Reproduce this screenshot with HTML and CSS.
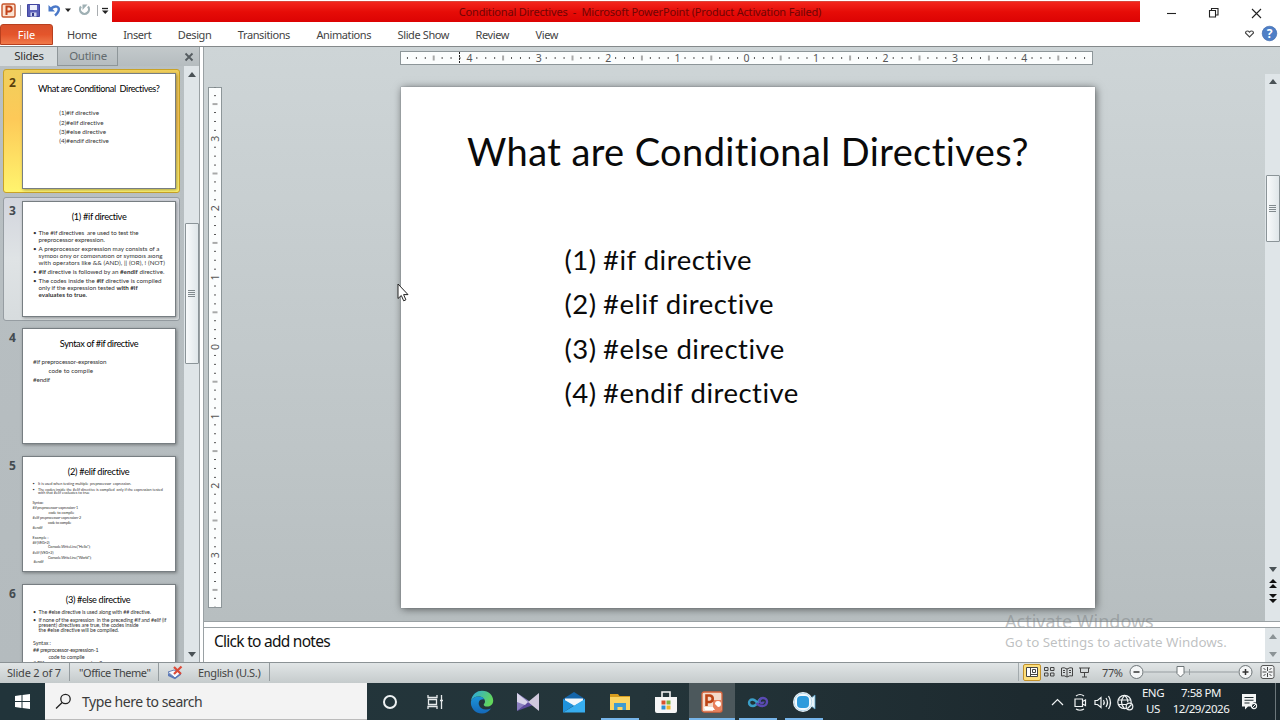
FILE: index.html
```html
<!DOCTYPE html>
<html lang="en">

<head>
    <meta charset="UTF-8">
    <meta name="viewport" content="width=device-width, initial-scale=1.0">
    <link rel="stylesheet" href="styles.css">
    <title>Conditional Directives</title>
</head>

<body>
    <div class="screen">
        <!-- title bar -->
        <header class="titlebar">
            <div class="quick">
                <svg width="112" height="24" viewBox="0 0 112 24">
                    <rect x="2" y="4" width="13" height="13" rx="1.5" fill="#fbe3d3" stroke="#c8552a" stroke-width="1.4" />
                    <path d="M6.5 15V6.5h2.7a2.4 2.4 0 0 1 0 5H6.5" fill="none" stroke="#c2431a" stroke-width="2" />
                    <path d="M20.5 5v11M97.5 5v11" stroke="#a9adb0" />
                    <path d="M27.5 4.5h12v12h-12z" fill="#5a5fb8" stroke="#4146a0" />
                    <path d="M30 5h7v5h-7z" fill="#eef1fb" />
                    <path d="M30.5 12.5h6v4h-6z" fill="#d3d8ee" />
                    <path d="M32 13h2v3h-2z" fill="#34388c" />
                    <path d="M51 8.5c5-4 9-1.5 7.5 2.5-.7 1.9-2 3.2-3.5 4.5" fill="none" stroke="#4a78c8" stroke-width="2.4" />
                    <path d="M48.5 5v6.5h6.5z" fill="#4a78c8" />
                    <path d="M65 8.5h6l-3 3.5z" fill="#222" />
                    <path d="M81 6.5a4.5 4.5 0 1 0 7 0" fill="none" stroke="#9fb0b4" stroke-width="2.2" />
                    <path d="M82.500 4.500v5.500l5-5.500z" fill="#9fb0b4" />
                    <path d="M102 8.5h6" stroke="#222" stroke-width="1.3" />
                    <path d="M102 10.5h6.5l-3.25 3.5z" fill="#222" />
                </svg>
            </div>
            <div class="title"><span>Conditional Directives &nbsp;-&nbsp; Microsoft PowerPoint (Product Activation Failed)</span></div>
            <svg class="window-buttons" width="140" height="24" viewBox="0 0 140 24" fill="none" stroke="#222" stroke-width="1.1">
                <path d="M27 13.5h9" />
                <path d="M69.5 10.5h6v6.5h-6zM71.5 10.5v-2h6.5v6.5h-2.5" />
                <path d="M112 9l9 9M121 9l-9 9" />
            </svg>
        </header>

        <!-- ribbon tabs -->
        <nav class="ribbon">
            <div class="file">File</div>
            <div class="tabs">
                <span>Home</span>
                <span>Insert</span>
                <span>Design</span>
                <span>Transitions</span>
                <span>Animations</span>
                <span>Slide Show</span>
                <span>Review</span>
                <span>View</span>
            </div>
            <svg width="40" height="20" viewBox="0 0 40 20">
                <path d="M5.5 9q0-2 2-2 1 0 2 1.2 1-1.2 2-1.2 2 0 2 2l-4 4z" fill="#fff" stroke="#444" stroke-width="1.1" />
                <circle cx="29.5" cy="9.5" r="7.3" fill="#4f7fc6" stroke="#3563a8" stroke-width=".6" />
                <text x="29.5" y="14" text-anchor="middle" class="help">?</text>
            </svg>
        </nav>

        <main class="main">
            <aside class="pane">
                <div class="pane-tabs">
                    <div class="pane-tab current">Slides</div>
                    <div class="pane-tab">Outline</div>
                    <svg width="10" height="10" viewBox="0 0 10 10" stroke="#555c60" stroke-width="1.8">
                        <path d="M1.5 1.5l7 7M8.5 1.5l-7 7" />
                    </svg>
                </div>
                <div class="pane-body">
                    <div class="thumbs">
                        <div class="thumb selected">
                            <b>2</b>
                            <svg class="mini" viewBox="0 0 153 115">
                                <text class="h" x="15" y="18" textLength="123">What are Conditional&#160; Directives?</text>
                                <text x="36.5" y="41.5" textLength="40">(1)#if directive</text>
                                <text x="36.5" y="51" textLength="44.5">(2)#elif directive</text>
                                <text x="36.5" y="60.5" textLength="47">(3)#else directive</text>
                                <text x="36.5" y="69.7" textLength="50">(4)#endif directive</text>
                            </svg>
                        </div>
                        <div class="thumb hover">
                            <b>3</b>
                            <svg class="mini" viewBox="0 0 153 115">
                                <text class="h" x="49" y="18" textLength="55.5">(1) #if directive</text>
                                <text x="10" y="33.5">•</text>
                                <text x="15.5" y="33.5" textLength="101">The #if directives&#160; are used to test the</text>
                                <text x="15.5" y="40.5" textLength="67">preprocessor expression.</text>
                                <text x="10" y="49.5">•</text>
                                <text x="15.5" y="49.5" textLength="122">A preprocessor expression may consists of a</text>
                                <text x="15.5" y="57" textLength="125">symbol only or combination of symbols along</text>
                                <text x="15.5" y="64" textLength="127.5">with operators like &amp;&amp; (AND), || (OR), ! (NOT)</text>
                                <text x="10" y="73">•</text>
                                <text x="15.5" y="73" textLength="127"><tspan class="b">#if</tspan> directive is followed by an <tspan class="b">#endif</tspan> directive.</text>
                                <text x="10" y="81.5">•</text>
                                <text x="15.5" y="81.5" textLength="124">The codes inside the <tspan class="b">#if</tspan> directive is compiled</text>
                                <text x="15.5" y="89" textLength="100">only if the expression tested <tspan class="b">with #if</tspan></text>
                                <text class="b" x="15.5" y="96" textLength="49">evaluates to true.</text>
                            </svg>
                        </div>
                        <div class="thumb">
                            <b>4</b>
                            <svg class="mini" viewBox="0 0 153 115">
                                <text class="h" x="37" y="18" textLength="79.5">Syntax of #if directive</text>
                                <text x="10" y="35" textLength="74">#if preprocessor-expression</text>
                                <text x="25.5" y="44" textLength="45">code to compile</text>
                                <text x="10" y="53.5" textLength="17">#endif</text>
                            </svg>
                        </div>
                        <div class="thumb">
                            <b>5</b>
                            <svg class="mini tiny" viewBox="0 0 153 115">
                                <text class="h" x="45" y="18" textLength="62.5">(2) #elif directive</text>
                                <text x="9.5" y="28.2">•</text>
                                <text x="15" y="28.2" textLength="94">It is used when testing multiple&#160; preprocessor&#160; expression.</text>
                                <text x="9.5" y="34">•</text>
                                <text x="15" y="34" textLength="126">The codes inside the #elif directive is complied&#160; only if the expression tested</text>
                                <text x="15" y="37.8" textLength="52">with that #elif evaluates to true</text>
                                <text x="9.5" y="47.3" textLength="11">Syntax:</text>
                                <text x="9.5" y="52.7" textLength="46">#if preprocessor-expression-1</text>
                                <text x="25.5" y="57.5" textLength="26">code to compile</text>
                                <text x="9.5" y="62.3" textLength="49">#elif preprocessor-expression-2</text>
                                <text x="25" y="67.5" textLength="23.5">code to compile</text>
                                <text x="9.5" y="72.3" textLength="10">#endif</text>
                                <text x="9.5" y="82.8" textLength="16">Example :</text>
                                <text x="9.5" y="87.5" textLength="17">#if (VEG&gt;2)</text>
                                <text x="25" y="92.3" textLength="43">Console.WriteLine("Hello");</text>
                                <text x="9.5" y="97.6" textLength="21">#elif (VEG&lt;2)</text>
                                <text x="25" y="102.5" textLength="44">Console.WriteLine("World");</text>
                                <text x="10.5" y="107.2" textLength="10">#endif</text>
                            </svg>
                        </div>
                        <div class="thumb">
                            <b>6</b>
                            <svg class="mini mid" viewBox="0 0 153 115">
                                <text class="h" x="43" y="18" textLength="65.5">(3) #else directive</text>
                                <text x="10" y="29.3">•</text>
                                <text x="15.5" y="29.3" textLength="113.5">The #else directive is used along with ## directive.</text>
                                <text x="10" y="37">•</text>
                                <text x="15.5" y="37" textLength="129">If none of the expression&#160; in the preceding #if and #elif (if</text>
                                <text x="15.5" y="42" textLength="101">present) directives are true, the codes inside</text>
                                <text x="15.5" y="47.5" textLength="81">the #else directive will be compiled.</text>
                                <text x="10" y="60.3" textLength="18">Syntax :</text>
                                <text x="10" y="68" textLength="66">## preprocessor-expression-1</text>
                                <text x="25.5" y="74.5" textLength="36.5">code to compile</text>
                                <text x="10" y="81" textLength="70"># Elif preprocessor-expression-2</text>
                            </svg>
                        </div>
                    </div>
                    <div class="scroll">
                        <i class="up"></i>
                        <div class="grip pane-grip"><i class="lines"></i></div>
                        <i class="down"></i>
                    </div>
                </div>
            </aside>
            <div class="split"></div>

            <section class="work">
                <div class="stage">
                    <svg class="hruler" width="693" height="14" viewBox="0 0 693 14">
                        <defs>
                            <pattern id="h" x="346" y="0" width="69.4" height="14" patternUnits="userSpaceOnUse">
                                <path class="dots" d="M8.2 7h1.2M16.9 7h1.2M25.5 7h1.2M42.9 7h1.2M51.5 7h1.2M60.2 7h1.2" stroke="#555" stroke-width="1.4" />
                                <path d="M34.7 4.5v5" stroke="#555" />
                            </pattern>
                        </defs>
                        <rect x=".5" y=".5" width="692" height="13" fill="#fbfdfd" stroke="#8d9699" />
                        <rect width="692" height="14" fill="url(#h)" />
                        <path d="M59.5 1v12" stroke="#222" stroke-dasharray="2 1" />
                        <g class="nums">
                            <text x="69.5" y="10.500">4</text>
                            <text x="138.8" y="10.500">3</text>
                            <text x="208.2" y="10.500">2</text>
                            <text x="277.5" y="10.500">1</text>
                            <text x="346.5" y="10.500">0</text>
                            <text x="416" y="10.500">1</text>
                            <text x="485.5" y="10.500">2</text>
                            <text x="555" y="10.500">3</text>
                            <text x="624.3" y="10.500">4</text>
                        </g>
                    </svg>
                    <div class="canvas">
                        <svg class="vruler" width="14" height="521" viewBox="0 0 14 521">
                            <defs>
                                <pattern id="v" x="0" y="260" width="14" height="69.4" patternUnits="userSpaceOnUse">
                                    <path class="dots" d="M7 8.2v1.2M7 16.9v1.2M7 25.5v1.2M7 42.9v1.2M7 51.5v1.2M7 60.2v1.2" stroke="#555" stroke-width="1.6" />
                                    <path d="M4.5 34.7h5" stroke="#555" />
                                </pattern>
                            </defs>
                            <rect x=".5" y=".5" width="13" height="520" fill="#fbfdfd" stroke="#8d9699" />
                            <rect width="14" height="520" fill="url(#v)" />
                            <g class="nums">
                                <text transform="translate(11 51.8) rotate(-90)">3</text>
                                <text transform="translate(11 121.2) rotate(-90)">2</text>
                                <text transform="translate(11 190.6) rotate(-90)">1</text>
                                <text transform="translate(11 260) rotate(-90)">0</text>
                                <text transform="translate(11 329.4) rotate(-90)">1</text>
                                <text transform="translate(11 398.8) rotate(-90)">2</text>
                                <text transform="translate(11 468.2) rotate(-90)">3</text>
                            </g>
                        </svg>
                        <article class="slide">
                            <h1>What are Conditional Directives?</h1>
                            <ul>
                                <li><span>(1)</span>#if directive</li>
                                <li><span>(2)</span>#elif directive</li>
                                <li><span>(3)</span>#else directive</li>
                                <li><span>(4)</span>#endif directive</li>
                            </ul>
                        </article>
                    </div>
                    <div class="scroll stage-scroll">
                        <i class="up"></i>
                        <div class="grip stage-grip"><i class="lines"></i></div>
                        <i class="down"></i>
                        <svg width="12" height="30" viewBox="0 0 12 30" fill="#111">
                            <path d="M6 3l4 4H2zM6 8l4 4H2zM2 18h8l-4 4zM2 23h8l-4 4z" />
                        </svg>
                    </div>
                </div>
                <div class="notes">
                    <span>Click to add notes</span>
                    <div class="scroll notes-scroll"><i class="up"></i><i class="down"></i></div>
                </div>
            </section>
        </main>

        <!-- status bar -->
        <footer class="status">
            <div class="cell s-slide"><span>Slide 2 of 7</span></div>
            <div class="cell s-theme"><span>"Office Theme"</span></div>
            <div class="cell s-lang">
                <svg width="16" height="15" viewBox="0 0 16 15">
                    <path d="M1 7l6-2 7 3-6 5z" fill="#f7f9ff" stroke="#6a83b8" />
                    <path d="M1 8v3l7 3.3 6-4.5V8l-6 4.5z" fill="#5b79b8" />
                    <path d="M7 2l7 7M14.5 1.5L7 9" stroke="#dc4a38" stroke-width="2.2" />
                </svg>
                <span>English (U.S.)</span>
            </div>
            <div class="views">
                <div class="view on">
                    <svg width="12" height="10" viewBox="0 0 12 10" fill="#fff" stroke="#444"><path d="M.5.5h11v9H.5zM4.5.5v9M6.5 2.5h3v3h-3zM4.5 7.5h7" /></svg>
                </div>
                <div class="view">
                    <svg width="11" height="10" viewBox="0 0 11 10" fill="none" stroke="#444"><path d="M.5.5h3.5v3H.5zM6.5.5H10v3H6.5zM.5 6H4v3H.5zM6.5 6H10v3H6.5z" /></svg>
                </div>
                <div class="view">
                    <svg width="12" height="11" viewBox="0 0 12 11" fill="none" stroke="#444"><path d="M6 2v8M6 2Q3 0 .5 1v8Q3 8 6 10 9 8 11.5 9V1Q9 0 6 2M2 3.5h2M2 5.5h2M8 3.5h2M8 5.5h2" /></svg>
                </div>
                <div class="view">
                    <svg width="11" height="11" viewBox="0 0 11 11" fill="none" stroke="#444"><path d="M0 1h11M1.5 1v4.5h8V1M5.5 5.5V10M3 10h5" /></svg>
                </div>
            </div>
            <span class="percent">77%</span>
            <svg class="zoom" width="150" height="20" viewBox="0 0 150 20" fill="none" stroke="#6d7477">
                <path d="M15 10h94M60.5 7v6" stroke="#979ea1" />
                <circle cx="7.5" cy="10" r="6.5" fill="#f4f6f7" />
                <path d="M4.5 10h6" stroke="#333" stroke-width="1.5" />
                <path d="M48 4.5h7v7l-3.5 3.5-3.5-3.5z" fill="#fdfdfd" />
                <circle cx="116.5" cy="10" r="6.5" fill="#f4f6f7" />
                <path d="M113.5 10h6M116.5 7v6" stroke="#333" stroke-width="1.5" />
                <rect x="132" y="3.5" width="13" height="13" rx="2" fill="#f1f3f4" stroke="#555" />
                <path d="M138.5 5v4M138.5 11v4M133.5 10h4M139.5 10h4M134.5 6l2 2M142.5 6l-2 2M134.5 14l2-2M142.5 14l-2-2" stroke="#444" />
            </svg>
        </footer>

        <!-- windows taskbar -->
        <footer class="taskbar">
            <div class="start">
                <svg width="15" height="15" viewBox="0 0 15 15" fill="#fff"><path d="M0 2l6.5-.9V7H0zM7.5 1L15 0v7H7.5zM0 8h6.5v5.9L0 13zM7.5 8H15v7l-7.5-1z" /></svg>
            </div>
            <div class="search">
                <svg width="17" height="17" viewBox="0 0 17 17" fill="none" stroke="#222" stroke-width="1.3"><circle cx="10.5" cy="6" r="4.7" /><path d="M7.2 9.5L1 15.5" /></svg>
                <span>Type here to search</span>
            </div>
            <div class="apps">
                <div class="app"><svg width="16" height="16" viewBox="0 0 16 16"><circle cx="8" cy="8" r="6" fill="none" stroke="#eef2f3" stroke-width="2" /></svg></div>
                <div class="app task-view"><svg width="18" height="16" viewBox="0 0 18 16" fill="none" stroke="#e6eaeb" stroke-width="1.3"><path d="M2 1v2.5h9V1M2 15v-2.5h9V15M2.5 5.5h8v5h-8zM15.5 1v14M14 6.5h3" /></svg></div>
                <div class="app">
                    <svg width="24" height="24" viewBox="0 0 24 24">
                        <defs>
                            <linearGradient id="e1" x1="0" y1="0" x2="1" y2=".4"><stop offset="0" stop-color="#2aa5e4" /><stop offset="1" stop-color="#62d65c" /></linearGradient>
                            <linearGradient id="e2" x1="0" y1="0" x2="0" y2="1"><stop offset="0" stop-color="#1c94d8" /><stop offset="1" stop-color="#1468b8" /></linearGradient>
                        </defs>
                        <path d="M1 11C2 4 7 .8 12 .8c7 0 11.2 5 11.2 9.7 0 4-3 6-6 6-2.5 0-3.5-1-3.5-1.8 0-.7 1.3-1.2 1.3-3.2C15 8.5 12 6.5 8.5 6.5 5 6.5 2.5 8 1 11z" fill="url(#e1)" />
                        <path d="M1 11c1.5-3 4-4.5 7.5-4.5 3 0 5 1.2 6 3C10 8.5 8 12 9 15c1.2 4 6 6 12 3.5-2.5 3.5-5.5 5-9 5C4.5 23.5 0 17 1 11z" fill="url(#e2)" />
                    </svg>
                </div>
                <div class="app">
                    <svg width="24" height="20" viewBox="0 0 24 20"><path d="M1 1l12 8v2L1 19z" fill="#8b7fc0" /><path d="M1 19l11-9 5 3z" fill="#5d4a9c" /><path d="M23 1L12 10l11 9z" fill="#cfc8dc" /><path d="M1 1l11 9-3 3-8-3z" fill="#d9d4ea" /></svg>
                </div>
                <div class="app">
                    <svg width="24" height="22" viewBox="0 0 24 22"><path d="M1 8l11-7 11 7v5H1z" fill="#1565a9" /><path d="M3 7.5h18V10l-9 5-9-5z" fill="#f2f7fb" /><path d="M1 8l11 6.5L1 21.5z" fill="#1e92dc" /><path d="M23 8L1 21.5h22z" fill="#37aef0" /></svg>
                </div>
                <div class="app open">
                    <svg width="22" height="20" viewBox="0 0 22 20"><path d="M1 2h8l1.5 2H21v4H1z" fill="#d89d1e" /><path d="M1 5h20v13H1z" fill="#fbd462" /><path d="M5 18v-7h12v7h-3.5v-3h-5v3z" fill="#3f9bd0" /></svg>
                </div>
                <div class="app">
                    <svg width="24" height="24" viewBox="0 0 24 24"><path d="M8 7V2h8v5" fill="none" stroke="#f4f4f4" stroke-width="1.6" /><path d="M1 7h22v14q0 2-2 2H3q-2 0-2-2z" fill="#f6f6f6" /><path d="M7.5 10.5h4v4h-4z" fill="#d9502e" /><path d="M12.5 10.5h4v4h-4z" fill="#7cb342" /><path d="M7.5 15.5h4v4h-4z" fill="#2f8fd4" /><path d="M12.5 15.5h4v4h-4z" fill="#f0b62c" /></svg>
                </div>
                <div class="app open active">
                    <svg width="22" height="22" viewBox="0 0 22 22"><rect x="1" y="1" width="20" height="20" rx="2" fill="#f4d9c9" stroke="#d6623a" stroke-width="1.3" /><path d="M12 9h8v11h-8z" fill="#e9805c" /><path d="M5.5 15V4.5H9a3.3 3.3 0 0 1 0 6.5H5.5" fill="none" stroke="#bd4315" stroke-width="2.6" /><path d="M3 16h9l2 3H4zM14 13a3 3 0 1 1 3 3z" fill="#fff" /></svg>
                </div>
                <div class="app open">
                    <svg width="22" height="14" viewBox="0 0 22 14" fill="none" stroke-width="2.4"><path d="M14 3.500C11 5 10.500 11 6 11 .8 11 .8 4.500 5.500 4.500c2 0 3.500 1.500 5 3.500" stroke="#3a9fc8" /><path d="M9.500 8c1.500 2 3 3 5.500 3 6.500 0 6.500-8 1-8-3.500 0-4.500 4-2 5 1.500.5 2.500-.5 2.500-1.500" stroke="#5a4ab4" /></svg>
                </div>
                <div class="app open">
                    <svg width="24" height="22" viewBox="0 0 24 22"><path d="M18 8l5-4v14l-5-4z" fill="#e6f4fb" stroke="#5aa6cf" stroke-width=".8" /><circle cx="11" cy="11" r="10" fill="#f2f9fd" /><circle cx="11" cy="11" r="8.8" fill="none" stroke="#a8cfe4" stroke-width=".8" /><rect x="5" y="5" width="12" height="12" rx="4" fill="#2e9bdc" /></svg>
                </div>
            </div>
            <svg class="tray" width="92" height="24" viewBox="0 0 92 24" fill="none" stroke="#f0f3f4" stroke-width="1.2">
                <path d="M7 15l5.5-5.5L18 15" />
                <path d="M30 9h7.5v7.5H30zM37.5 11.5l3-1.5v5.5l-3-1.5M31 6q4-3 8 0M31 19q4 2.5 8 0" />
                <path d="M50 10.5h2.5l3.5-3v10l-3.5-3H50zM58.5 10q1.5 2.5 0 5M61 8q3 4.5 0 9M63.5 6q4 6.5 0 13" />
                <circle cx="79.5" cy="12" r="6.7" />
                <path d="M73 10h13M73 14.5h8M79.5 5.3q-6 6.7 0 13.4M79.5 5.3q3.5 3 3.3 7" />
                <circle cx="84.5" cy="16.5" r="3.3" fill="#1d2b30" />
                <path d="M82.5 18.5l4-4" />
            </svg>
            <div class="stack lang"><span>ENG</span><span>US</span></div>
            <div class="stack clock"><span>7:58 PM</span><span>12/29/2026</span></div>
            <svg class="action" width="17" height="18" viewBox="0 0 17 18"><path d="M1 1h14v8.5a3.5 3.5 0 0 0-4.5 4H7L4 16.5v-3H1z" fill="#f3f5f5" /><path d="M3.5 4.5h9M3.5 7.2h9M3.5 10h5" stroke="#222f33" stroke-width="1.1" /><circle cx="13" cy="13" r="2.6" fill="none" stroke="#f3f5f5" stroke-width="1.1" /><path d="M11 15l4-4" stroke="#f3f5f5" /></svg>
            <i class="peek"></i>
        </footer>

        <!-- activation watermark and pointer lie over everything -->
        <div class="watermark">
            <div class="wm-title">Activate Windows</div>
            <div class="wm-text">Go to Settings to activate Windows.</div>
        </div>
        <svg class="pointer" width="13" height="19" viewBox="0 0 13 19"><path d="M1 1v14.5l3.3-3 2.4 5.3 2.2-1-2.3-5.2H11z" fill="#fff" stroke="#222" /></svg>
    </div>
</body>

</html>
```
FILE: styles.css
```css
* {
    margin: 0;
    padding: 0;
    box-sizing: border-box;
}

body {
    width: 1280px;
    height: 720px;
    overflow: hidden;
    font-family: "Noto Sans", "Open Sans", sans-serif;
    font-size: 11px;
    font-variant-ligatures: none;
    color: #444;
}

svg {
    display: block;
    flex-shrink: 0;
}

span {
    white-space: nowrap;
}

.screen {
    position: relative;
    width: 1280px;
    height: 720px;
    display: flex;
    flex-direction: column;
    background: #fff;
}

/* title bar */
.titlebar {
    height: 24px;
    display: flex;
}

.title {
    width: 1028px;
    height: 21px;
    margin-top: 1px;
    display: flex;
    align-items: center;
    justify-content: center;
    background: linear-gradient(#f3261c, #e60c07 50%, #dc0303);
    border-top: 1px solid #d8453a;
    color: #700505;
    letter-spacing: -0.18px;
    line-height: 19px;
    padding-bottom: 1px;
}

.title span {
    margin-left: 28px;
}

/* ribbon */
.ribbon {
    height: 23px;
    display: flex;
    border-bottom: 1px solid #84898b;
}

.ribbon > svg {
    margin-left: auto;
}

.file {
    width: 53px;
    height: 21px;
    line-height: 20px;
    text-align: center;
    color: #fff;
    background: linear-gradient(#d9512c, #e4552b 50%, #f0794a);
    border: 1px solid #b8401f;
    border-radius: 3px 3px 0 0;
}

.tabs {
    display: flex;
    gap: 26.5px;
    padding-left: 14px;
    line-height: 21px;
    letter-spacing: -0.4px;
}

.help {
    font: bold 12px "Noto Sans", sans-serif;
    fill: #fff;
}

.main {
    height: 615px;
    display: flex;
    overflow: hidden;
}

/* slides pane */
.pane {
    width: 199px;
    display: flex;
    flex-direction: column;
    background: linear-gradient(#b9c0c3, #b4bbbe);
}

.pane-tabs {
    height: 19px;
    display: flex;
    font-size: 11.5px;
    line-height: 18px;
    letter-spacing: -0.3px;
    background: linear-gradient(#c3c9cb, #b5bcbf);
}

.pane-tab {
    width: 60px;
    padding-left: 1px;
    text-align: center;
    color: #626a6e;
    border-right: 1px solid #8e9699;
    border-bottom: 1px solid #8e9699;
}

.pane-tab.current {
    width: 58px;
    color: #333;
    background: #d5dbdd;
    border-bottom: 0;
}

.pane-tabs svg {
    margin: 5px 5px 0 auto;
}

.pane-body {
    flex: 1;
    min-height: 0;
    display: flex;
    justify-content: space-between;
}

.thumbs {
    width: 180px;
    padding: 3px 0 0 3px;
    overflow: hidden;
}

.thumb {
    width: 177px;
    height: 124px;
    margin-bottom: 3.7px;
    padding: 3px 3px 3px 5px;
    display: flex;
    border: 1px solid transparent;
    border-radius: 3px;
}

.thumb b {
    width: 13px;
    padding-top: 2px;
    font-size: 12px;
    line-height: 16px;
    color: #444b50;
}

.thumb.selected {
    background: linear-gradient(#f0cf5b, #fdc958 40%, #fff46e);
    border-color: #c9a227;
}

.thumb.selected b {
    color: #59400c;
}

.thumb.hover {
    background: linear-gradient(#d2d5dd, #dfe3e5 50%, #d7dcde);
    border-color: #969da2;
}

.mini {
    width: 154px;
    height: 116px;
    background: #fff;
    border: 1px solid #777e82;
    box-shadow: 1px 1px 3px rgba(0, 0, 0, .35);
    font: 6.3px Lato, sans-serif;
    font-variant-ligatures: none;
    fill: #333;
}

.mini .h {
    font-size: 9.3px;
    fill: #000;
}

.mini .b {
    font-weight: bold;
}

.mini.mid {
    font-size: 5.4px;
}

.mini.tiny {
    font-size: 3.8px;
}

/* scroll bars */
.scroll {
    width: 15px;
    display: flex;
    flex-direction: column;
    align-items: center;
    background: #dfe5e8;
}

.up,
.down {
    border: 4.5px solid transparent;
    border-top: 0;
    border-bottom: 5px solid #4a5256;
}

.down {
    margin-top: auto;
    border-bottom: 0;
    border-top: 5px solid #4a5256;
}

.pane .scroll {
    padding: 6px 0 5px;
}

.grip {
    width: 14px;
    display: flex;
    align-items: center;
    justify-content: center;
    background: linear-gradient(to right, #f8fafb, #dfe6e9);
    border: 1px solid #8b9498;
    border-radius: 1px;
}

.lines {
    width: 7px;
    height: 7px;
    background: repeating-linear-gradient(#818a8e 0 1px, transparent 1px 2px);
}

.pane-grip {
    height: 141px;
    margin-top: 146px;
}

.split {
    width: 5px;
    background: #fff;
    border-left: 1px solid #9aa1a4;
    border-right: 1px solid #9aa1a4;
}

/* editing area */
.work {
    flex: 1;
    display: flex;
    flex-direction: column;
}

.stage {
    height: 575px;
    display: grid;
    grid-template-columns: 1061px 15px;
    grid-template-rows: 27px 1fr;
    background: linear-gradient(#ced5d7, #b7bec0);
    border-bottom: 1px solid #9aa1a4;
}

.hruler {
    margin: 4px 0 0 196px;
}

.dots {
    shape-rendering: crispEdges;
}

.nums {
    font: 10.5px "Noto Sans", sans-serif;
    fill: #555;
    text-anchor: middle;
}

.canvas {
    grid-column: 1;
    display: flex;
    padding: 13px 0 0 4px;
}

.slide {
    width: 694px;
    height: 521px;
    margin-left: 179px;
    background: #fff;
    box-shadow: 0 0 1px #6d7477, 1px 1px 8px rgba(0, 0, 0, .55);
    font-family: Lato, sans-serif;
    color: #0a0a0a;
}

.slide h1 {
    padding-top: 36px;
    text-align: center;
    font-size: 38px;
    line-height: 56px;
    font-weight: normal;
    letter-spacing: 0.4px;
}

.slide ul {
    padding: 59px 0 0 163.5px;
    list-style: none;
    font-size: 27.5px;
    line-height: 44.4px;
    letter-spacing: 0.5px;
}

.slide li {
    display: flex;
}

.slide li span {
    width: 38.5px;
}

.stage-scroll {
    padding-top: 5px;
}

.stage-grip {
    height: 67px;
    margin-top: 91px;
}

.stage-scroll svg {
    margin-top: 4px;
    margin-bottom: 15px;
}

.notes {
    height: 35px;
    margin-top: 5px;
    display: flex;
    justify-content: space-between;
    background: #fff;
    border-top: 1px solid #9aa1a4;
    font-size: 15.5px;
    line-height: 27px;
    color: #111;
    letter-spacing: -0.73px;
}

.notes span {
    padding-left: 10px;
}

.notes-scroll {
    padding: 6px 0 5px;
}

.notes-scroll .up,
.notes-scroll .down {
    border-top-color: #8b9396;
    border-bottom-color: #8b9396;
}

/* status bar */
.status {
    height: 21px;
    padding-bottom: 2px;
    display: flex;
    align-items: center;
    background: linear-gradient(#e1e5e6, #c5cbcc);
    border-top: 1px solid #8b9295;
    letter-spacing: -0.2px;
}

.cell {
    height: 18px;
    display: flex;
    align-items: center;
    border-right: 1px solid #959c9f;
}

.s-slide {
    width: 70px;
    padding-left: 7px;
}

.s-theme {
    width: 89px;
    padding-left: 9px;
    letter-spacing: -0.45px;
}

.s-lang {
    width: 111px;
    padding-left: 8px;
    gap: 15px;
    letter-spacing: -0.3px;
}

.views {
    margin-left: 748px;
    height: 18px;
    display: flex;
    align-items: center;
    border-left: 1px solid #a3aaad;
    padding-left: 4px;
}

.view {
    width: 17.5px;
    height: 17px;
    display: flex;
    align-items: center;
    justify-content: center;
}

.view.on {
    background: #fddf7c;
    border: 1px solid #c2912a;
    border-radius: 2px;
}

.percent {
    width: 36px;
    padding-left: 9px;
    letter-spacing: -0.4px;
}

/* taskbar */
.taskbar {
    height: 37px;
    display: flex;
    align-items: center;
    background: linear-gradient(to right, #21343a, #24353a 50%, #1d2a2f 80%, #1b282e);
}

.start {
    width: 45px;
    display: flex;
    justify-content: center;
}

.search {
    width: 322px;
    height: 37px;
    display: flex;
    align-items: center;
    gap: 10px;
    padding-left: 10px;
    background: #f3f3f3;
    border-bottom: 1px solid #bbb;
    font-size: 14px;
    color: #3b3b3b;
    letter-spacing: -0.45px;
}

.apps {
    display: flex;
}

.app {
    width: 46px;
    height: 37px;
    display: flex;
    align-items: center;
    justify-content: center;
}

.task-view svg {
    margin-right: 3px;
}

.app.open {
    background: linear-gradient(#76b5ea, #76b5ea) bottom / 38px 2px no-repeat;
}

.app.active {
    background: linear-gradient(#76b5ea, #76b5ea) bottom / 46px 2px no-repeat, #4c585c;
}

.tray {
    margin-left: 218px;
}

.stack {
    display: flex;
    flex-direction: column;
    align-items: center;
    font-size: 11.5px;
    line-height: 16px;
    padding-bottom: 1px;
    color: #f3f5f5;
    letter-spacing: -0.45px;
}

.lang {
    width: 32px;
}

.clock {
    width: 60px;
    margin-left: 2px;
}

.action {
    margin-left: 10px;
}

.peek {
    width: 1px;
    height: 37px;
    margin-left: auto;
    margin-right: 4px;
    background: #6c777b;
}

/* overlays */
.watermark {
    position: absolute;
    left: 1005px;
    top: 607px;
    color: rgba(125, 130, 132, .5);
}

.wm-title {
    height: 20px;
    overflow: hidden;
    font-size: 18px;
    line-height: 28px;
}

.wm-text {
    margin-top: 4px;
    font-size: 13.4px;
    line-height: 22px;
    white-space: nowrap;
}

.pointer {
    position: absolute;
    left: 397px;
    top: 283px;
}
```
